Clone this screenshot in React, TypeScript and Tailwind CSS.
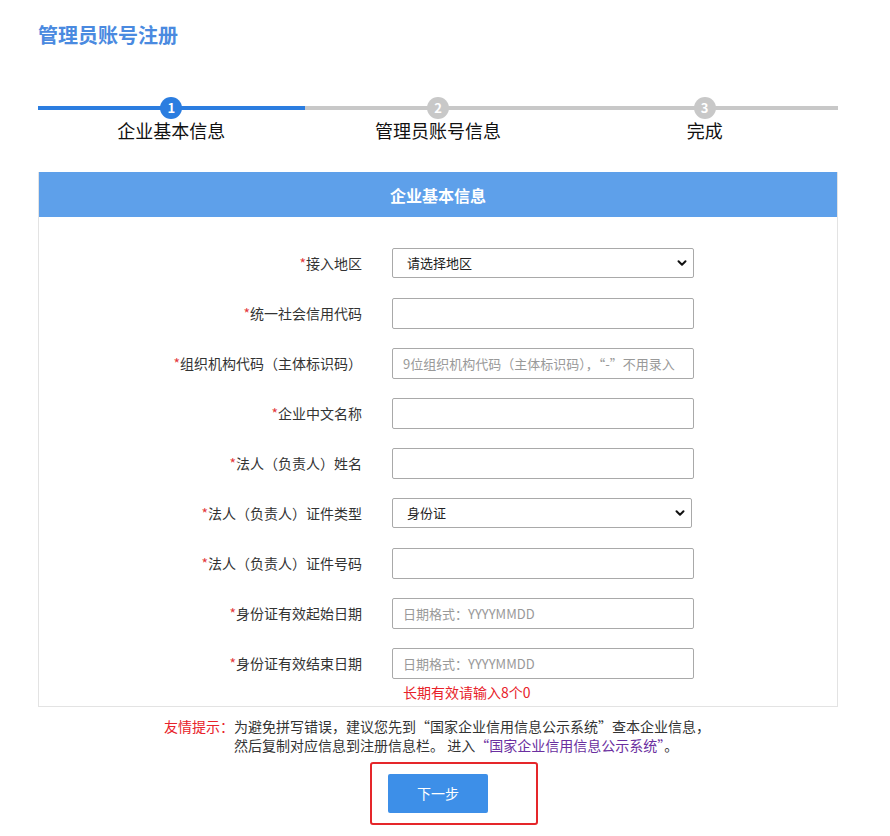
import React from 'react';

const font = { fontFamily: '"Microsoft YaHei", "Noto Sans CJK SC", "Noto Sans", sans-serif' };

const steps = [
  { n: 1, label: '企业基本信息', active: true },
  { n: 2, label: '管理员账号信息', active: false },
  { n: 3, label: '完成', active: false },
];

type Field = {
  label: string;
  kind: 'select' | 'input';
  value?: string;
  placeholder?: string;
  narrow?: boolean;
};

const fields: Field[] = [
  { label: '接入地区', kind: 'select', value: '请选择地区' },
  { label: '统一社会信用代码', kind: 'input' },
  { label: '组织机构代码（主体标识码）', kind: 'input', placeholder: '9位组织机构代码（主体标识码），“-”不用录入' },
  { label: '企业中文名称', kind: 'input' },
  { label: '法人（负责人）姓名', kind: 'input' },
  { label: '法人（负责人）证件类型', kind: 'select', value: '身份证', narrow: true },
  { label: '法人（负责人）证件号码', kind: 'input' },
  { label: '身份证有效起始日期', kind: 'input', placeholder: '日期格式：YYYYMMDD' },
  { label: '身份证有效结束日期', kind: 'input', placeholder: '日期格式：YYYYMMDD' },
];

function Chevron() {
  return (
    <svg width="12" height="12" viewBox="0 0 12 12" className="absolute right-[6px] top-1/2 -translate-y-1/2">
      <path d="M2.5 4.2 L6 7.7 L9.5 4.2" fill="none" stroke="#111" strokeWidth="2" strokeLinecap="round" strokeLinejoin="round" />
    </svg>
  );
}

function FieldRow({ f }: { f: Field }) {
  return (
    <div className="flex items-center h-[30px]">
      <label className="w-[353px] pr-[30px] text-right text-[14px] text-[#333] whitespace-nowrap">
        <span className="text-[#e4393c]">*</span>
        {f.label}
      </label>
      {f.kind === 'select' ? (
        <div className={`relative h-[30px] ${f.narrow ? 'w-[300px]' : 'w-[302px]'}`}>
          <div className="h-full border border-[#a9a9a9] rounded-[2px] bg-white flex items-center pl-[14px] text-[13px] text-[#222]">
            {f.value}
          </div>
          <Chevron />
        </div>
      ) : (
        <input
          className="h-[31px] w-[302px] border border-[#a9a9a9] rounded-[2px] px-[10px] text-[13px] text-[#333] placeholder:text-[#999] outline-none"
          placeholder={f.placeholder}
        />
      )}
    </div>
  );
}

export default function App() {
  return (
    <div className="w-[890px] h-[836px] bg-white px-[38px] pt-[22px]" style={font}>
      <h1 className="text-[20px] font-bold text-[#4a8ae0] leading-[26px]">管理员账号注册</h1>

      {/* steps */}
      <div className="flex mt-[49px] w-[800px]">
        {steps.map((s, i) => (
          <div key={s.n} className="flex-1 flex flex-col items-center">
            <div className="relative w-full h-[22px] flex items-center justify-center">
              <div
                className={`absolute left-0 right-0 top-[9px] h-[4px] ${i === 0 ? 'bg-[#2b7de0]' : 'bg-[#c8c8c8]'}`}
              />
              <div
                className={`relative z-10 w-[22px] h-[22px] rounded-full flex items-center justify-center text-white text-[13px] font-bold ${
                  s.active ? 'bg-[#2b7de0]' : 'bg-[#c8c8c8]'
                }`}
              >
                {s.n}
              </div>
            </div>
            <div className="text-[18px] text-[#111] leading-[24px] mt-[-1px]">{s.label}</div>
          </div>
        ))}
      </div>

      {/* panel */}
      <div className="mt-[30px] w-[800px] border border-[#e3e3e3] border-t-0">
        <div className="h-[45px] bg-[#5ea0ea] flex items-center justify-center text-white text-[16px] font-bold">
          企业基本信息
        </div>
        <div className="pt-[31px] pb-[6px] flex flex-col gap-[20px]">
          {fields.map((f) => (
            <FieldRow key={f.label} f={f} />
          ))}
        </div>
        <div className="pl-[364px] text-[14px] text-[#e8222a] leading-[18px] pb-[5px] -mt-[1px]">长期有效请输入8个0</div>
      </div>

      {/* tip */}
      <div className="flex mt-[10px] pl-[126px] text-[14px] leading-[19px] text-[#333]">
        <span className="text-[#e8222a] whitespace-nowrap">友情提示：</span>
        <div>
          为避免拼写错误，建议您先到“国家企业信用信息公示系统”查本企业信息，
          <br />
          然后复制对应信息到注册信息栏。 进入<span className="text-[#6b2fa0]">“国家企业信用信息公示系统”</span>。
        </div>
      </div>

      {/* next */}
      <div className="pl-[332px] mt-[7px]">
        <div className="w-[168px] h-[63px] border-2 border-[#e5262a] rounded-[3px] flex items-center pl-[16px]">
          <button className="w-[100px] h-[39px] bg-[#3d8fe8] text-white text-[14px] rounded-[2px]">下一步</button>
        </div>
      </div>
    </div>
  );
}
